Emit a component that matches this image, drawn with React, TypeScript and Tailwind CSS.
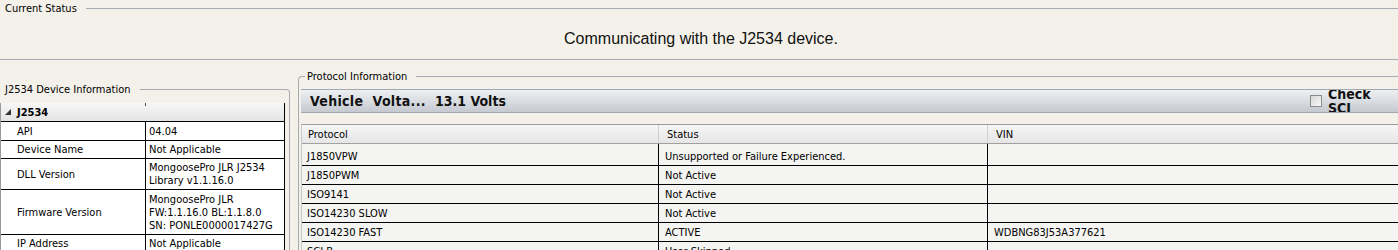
import React from "react";

const leftRows: { name: string; value: React.ReactNode; h: string }[] = [
  { name: "API", value: "04.04", h: "h-[19px]" },
  { name: "Device Name", value: "Not Applicable", h: "h-[18px]" },
  { name: "DLL Version", value: (<>MongoosePro JLR J2534<br />Library v1.1.16.0</>), h: "h-[31px]" },
  { name: "Firmware Version", value: (<>MongoosePro JLR<br />FW:1.1.16.0 BL:1.1.8.0<br />SN: PONLE0000017427G</>), h: "h-[45px]" },
  { name: "IP Address", value: "Not Applicable", h: "h-[18px]" },
];

const protoRows = [
  { p: "J1850VPW", s: "Unsupported or Failure Experienced.", v: "", first: true },
  { p: "J1850PWM", s: "Not Active", v: "" },
  { p: "ISO9141", s: "Not Active", v: "" },
  { p: "ISO14230 SLOW", s: "Not Active", v: "" },
  { p: "ISO14230 FAST", s: "ACTIVE", v: "WDBNG83J53A377621" },
  { p: "SCI B", s: "User Skipped", v: "" },
];

export default function App() {
  return (
    <div className="w-[1398px] h-[250px] overflow-hidden bg-[#f4f1ea] text-[11px] leading-[13px] text-black font-['DejaVu_Sans_Condensed','DejaVu_Sans',sans-serif]">
      {/* Current status */}
      <div className="h-[60px] border-b border-[#a6abb2] flex flex-col">
        <div className="h-[17px] flex items-center pl-[5px]">
          <span>Current Status</span>
          <div className="flex-1 h-px bg-[#a6abb2] ml-[9px]" />
        </div>
        <div className="mt-[13px] pl-[4px] text-center text-[16px] leading-[18px] font-['Liberation_Sans',Arial,sans-serif] text-[#111]">
          Communicating with the J2534 device.
        </div>
      </div>

      <div className="flex">
        {/* Left column */}
        <div className="w-[290px] shrink-0 flex flex-col">
          <div className="mt-[22px] h-[14px] flex">
            <span className="pl-[5px] self-center">J2534 Device Information</span>
            <div className="flex-1 h-px bg-[#a6abb2] ml-[9px] mt-[7px]" />
            <div className="w-[4px] h-[7px] mt-[7px] border-t border-r border-[#a6abb2] rounded-tr-[4px]" />
          </div>
          <div className="border-r border-[#a6abb2] h-[200px] pt-[7px]">
            <div className="w-[285px] border-l border-[#9a9a9a]">
              <div className="h-[18px] flex items-center bg-gradient-to-b from-[#f7f7f7] to-[#e4e4e4] border-r border-black relative">
                <svg width="6" height="6" viewBox="0 0 6 6" className="ml-[4px]">
                  <path d="M6 0 L6 6 L0 6 Z" fill="#333" />
                </svg>
                <span className="ml-[6px] font-bold">J2534</span>
                <div className="absolute left-[144px] top-0 w-px h-[3px] bg-[#555]" />
              </div>
              {leftRows.map((r) => (
                <div key={r.name} className={`flex border-t border-black ${r.h}`}>
                  <div className="w-[145px] shrink-0 border-r border-black pl-[16px] flex items-center bg-white">
                    {r.name}
                  </div>
                  <div className="flex-1 border-r border-black pl-[3px] flex items-center bg-white">
                    <div>{r.value}</div>
                  </div>
                </div>
              ))}
            </div>
          </div>
        </div>

        {/* Right column */}
        <div className="ml-[8px] flex-1 flex flex-col">
          <div className="mt-[9px] h-[14px] flex">
            <div className="w-[7px] h-[7px] mt-[7px] border-t border-l border-[#a6abb2] rounded-tl-[4px]" />
            <span className="pl-[2px] self-center">Protocol Information</span>
            <div className="flex-1 h-px bg-[#a6abb2] ml-[9px] mt-[7px]" />
          </div>
          <div className="border-l border-[#a6abb2] h-[200px] pl-[2px]">
            {/* Voltage bar */}
            <div className="mt-[6px] h-[24px] border-y border-[#a3a8b0] bg-gradient-to-b from-[#eef0f2] to-[#c5c9d0] flex items-center overflow-hidden text-[14px] font-bold text-[#111]">
              <span className="pl-[9px] w-[134px] whitespace-pre tracking-[0.3px]">Vehicle  Volta...</span>
              <span>13.1 Volts</span>
              <div className="flex-1" />
              <div className="w-[12px] h-[12px] border border-[#8c8c8c] bg-gradient-to-br from-[#d8d8d8] to-[#f8f8f8] mr-[6px]" />
              <div className="leading-[14px] w-[70px]">Check<br />SCI</div>
            </div>
            {/* Table */}
            <div className="mt-[11px] border-t border-[#9c9c9c] border-l border-l-[#c8c8c8]">
              <div className="h-[19px] flex border-b border-[#a0a0a0] bg-gradient-to-b from-[#f6f6f6] to-[#e6e6e6]">
                <div className="w-[357px] shrink-0 border-r border-[#d0d0d0] pl-[6px] flex items-center">Protocol</div>
                <div className="w-[329px] shrink-0 border-r border-[#d0d0d0] pl-[8px] flex items-center">Status</div>
                <div className="flex-1 pl-[8px] flex items-center">VIN</div>
              </div>
              {protoRows.map((r) => (
                <div key={r.p} className={`flex border-b border-black bg-[#f4f4f2] ${r.first ? "h-[22px]" : "h-[19px]"}`}>
                  <div className={`w-[357px] shrink-0 border-r border-black pl-[5px] ${r.first ? "pt-[6px]" : "pt-[3px]"}`}>{r.p}</div>
                  <div className={`w-[329px] shrink-0 border-r border-black pl-[6px] ${r.first ? "pt-[6px]" : "pt-[3px]"}`}>{r.s}</div>
                  <div className={`flex-1 pl-[6px] ${r.first ? "pt-[6px]" : "pt-[3px]"}`}>{r.v}</div>
                </div>
              ))}
            </div>
          </div>
        </div>
      </div>
    </div>
  );
}
